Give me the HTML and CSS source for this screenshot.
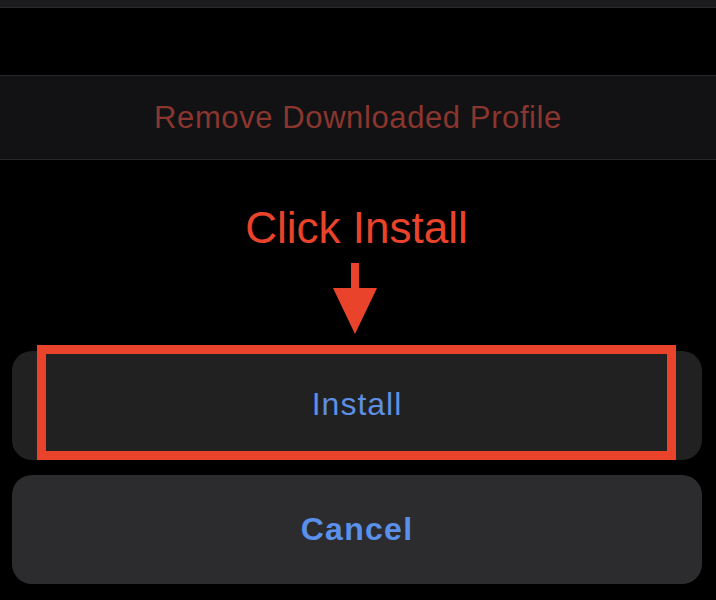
FILE: index.html
```html
<!DOCTYPE html>
<html>
<head>
<meta charset="utf-8">
<link rel="stylesheet" href="styles.css">
</head>
<body>
  <div class="topbar"></div>
  <div class="spacer"></div>
  <div class="row">
    <span class="remove">Remove Downloaded Profile</span>
  </div>
  <div class="annotation">
    <div class="hint">Click Install</div>
    <svg class="arrow" width="50" height="72" viewBox="0 0 50 72">
      <rect x="18" y="0" width="8" height="27" fill="#e9442b"/>
      <polygon points="0,25 44,25 22,71" fill="#e9442b"/>
    </svg>
  </div>
  <div class="actions">
    <div class="btn install">
      <span class="label">Install</span>
      <div class="highlight"></div>
    </div>
    <div class="btn cancel">
      <span class="label bold">Cancel</span>
    </div>
  </div>
</body>
</html>
```

FILE: styles.css
```css
html, body {
  margin: 0;
  padding: 0;
  background: #000;
  width: 716px;
  height: 600px;
  overflow: hidden;
  font-family: "Liberation Sans", Arial, sans-serif;
}
.topbar {
  height: 7px;
  background: #1b1b1d;
  border-bottom: 1px solid #2b2b2d;
}
.spacer {
  height: 67px;
}
.row {
  height: 83px;
  background: #121214;
  border-top: 1px solid #272729;
  border-bottom: 1px solid #272729;
  display: flex;
  align-items: center;
  justify-content: center;
}
.remove {
  font-size: 31px;
  line-height: 31px;
  letter-spacing: 0.6px;
  color: #8a362e;
}
.annotation {
  padding-top: 43px;
  display: flex;
  flex-direction: column;
  align-items: center;
}
.hint {
  font-size: 44px;
  line-height: 50px;
  color: #e9442b;
  margin-left: -3px;
}
.arrow {
  display: block;
  margin-top: 10px;
}
.actions {
  margin-top: 16px;
  padding: 0 14px 0 12px;
  display: flex;
  flex-direction: column;
  gap: 15px;
}
.btn {
  position: relative;
  height: 109px;
  border-radius: 20px;
  display: flex;
  align-items: center;
  justify-content: center;
  box-sizing: border-box;
}
.install {
  background: #212121;
  padding-bottom: 4px;
}
.cancel {
  background: #2c2c2e;
  padding-bottom: 2px;
}
.label {
  font-size: 32px;
  line-height: 32px;
  letter-spacing: 1px;
  color: #5e8fe3;
}
.bold {
  font-weight: bold;
  letter-spacing: 1.3px;
  color: #5b90ea;
}
.highlight {
  position: absolute;
  top: -6px;
  left: 25px;
  right: 26px;
  bottom: 0;
  border: 9px solid #e9442b;
}
```
